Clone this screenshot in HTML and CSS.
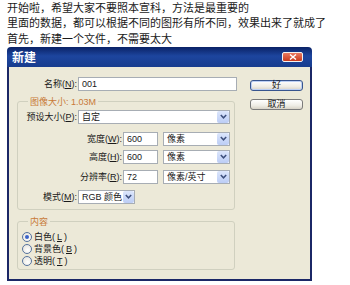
FILE: index.html
```html
<!DOCTYPE html>
<html lang="zh">

<head>
    <meta charset="UTF-8">
    <meta name="viewport" content="width=device-width, initial-scale=1.0">
    <title>新建</title>
    <link rel="stylesheet" href="styles.css">
</head>

<body>
    <p class="intro">开始啦，希望大家不要照本宣科，方法是最重要的<br>里面的数据，都可以根据不同的图形有所不同，效果出来了就成了<br>首先，新建一个文件，不需要太大</p>

    <div class="dialog">
        <div class="titlebar">
            <span class="title">新建</span>
            <span class="close">
                <svg width="8" height="6" viewBox="0 0 8 6"><path d="M1 0.5 L7 5.5 M7 0.5 L1 5.5" stroke="#fff" stroke-width="1.4" fill="none"/></svg>
            </span>
        </div>
        <div class="dialog-body">
            <div class="main">
                <div class="row">
                    <label class="lbl lbl-name">名称(<u>N</u>):</label>
                    <div class="field field-name">001</div>
                </div>

                <fieldset class="group group-size">
                    <legend>图像大小: 1.03M</legend>
                    <div class="row">
                        <label class="lbl lbl-short">预设大小(<u>P</u>):</label>
                        <div class="select select-preset"><span class="value">自定</span><span class="arrow"><svg width="7" height="5" viewBox="0 0 7 5"><path d="M0.8 1 L3.5 3.8 L6.2 1" stroke="#3d4f7c" stroke-width="1.5" fill="none"/></svg></span></div>
                    </div>
                    <div class="row row-w">
                        <label class="lbl lbl-long">宽度(<u>W</u>):</label>
                        <div class="field field-num">600</div>
                        <div class="select select-unit"><span class="value">像素</span><span class="arrow"><svg width="7" height="5" viewBox="0 0 7 5"><path d="M0.8 1 L3.5 3.8 L6.2 1" stroke="#3d4f7c" stroke-width="1.5" fill="none"/></svg></span></div>
                    </div>
                    <div class="row row-h">
                        <label class="lbl lbl-long">高度(<u>H</u>):</label>
                        <div class="field field-num">600</div>
                        <div class="select select-unit"><span class="value">像素</span><span class="arrow"><svg width="7" height="5" viewBox="0 0 7 5"><path d="M0.8 1 L3.5 3.8 L6.2 1" stroke="#3d4f7c" stroke-width="1.5" fill="none"/></svg></span></div>
                    </div>
                    <div class="row row-r">
                        <label class="lbl lbl-long">分辨率(<u>R</u>):</label>
                        <div class="field field-num">72</div>
                        <div class="select select-unit"><span class="value">像素/英寸</span><span class="arrow"><svg width="7" height="5" viewBox="0 0 7 5"><path d="M0.8 1 L3.5 3.8 L6.2 1" stroke="#3d4f7c" stroke-width="1.5" fill="none"/></svg></span></div>
                    </div>
                    <div class="row row-m">
                        <label class="lbl lbl-short">模式(<u>M</u>):</label>
                        <div class="select select-mode"><span class="value">RGB 颜色</span><span class="arrow"><svg width="7" height="5" viewBox="0 0 7 5"><path d="M0.8 1 L3.5 3.8 L6.2 1" stroke="#3d4f7c" stroke-width="1.5" fill="none"/></svg></span></div>
                    </div>
                </fieldset>

                <fieldset class="group group-content">
                    <legend>内容</legend>
                    <div class="radio checked"><span class="dot"></span>白色(<u>L</u>)</div>
                    <div class="radio"><span class="dot"></span>背景色(<u>B</u>)</div>
                    <div class="radio"><span class="dot"></span>透明(<u>T</u>)</div>
                </fieldset>
            </div>

            <div class="side">
                <button class="btn btn-default">好</button>
                <button class="btn">取消</button>
            </div>
        </div>
    </div>
</body>

</html>
```

FILE: styles.css
```css
body {
    margin: 0;
    background: #fff;
    color: #1a1a1a;
    font-family: "Liberation Sans", "Noto Sans CJK SC", sans-serif;
}

.intro {
    margin: 0;
    padding: 1px 0 0 7px;
    font-size: 11px;
    line-height: 15.3px;
}

.dialog {
    margin-left: 7px;
    width: 305px;
    height: 234px;
    display: flex;
    flex-direction: column;
    font-size: 9px;
}

.titlebar {
    height: 20px;
    flex: none;
    display: flex;
    align-items: center;
    justify-content: space-between;
    padding: 0 9px 0 5px;
    border-radius: 4px 4px 0 0;
    background: linear-gradient(to bottom, #0a2266, #1d459e 45%, #173c8e 100%);
}

.title {
    color: #fff;
    font-weight: bold;
    font-size: 12px;
}

.close {
    width: 21px;
    height: 10px;
    box-sizing: border-box;
    display: flex;
    align-items: center;
    justify-content: center;
    border: 1px solid #f2f2f2;
    border-radius: 2px;
    background: linear-gradient(to bottom, #ea7a60, #c9391c);
}

.dialog-body {
    flex: 1;
    display: flex;
    padding: 10px 7px 0 8px;
    background: #ece9d8;
    border: 2px solid #1b2766;
    border-top: none;
}

.main {
    width: 220px;
}

.row {
    display: flex;
    align-items: center;
    height: 14px;
}

.row-w {
    margin-top: 8px;
}

.row-h {
    margin-top: 4px;
}

.row-r,
.row-m {
    margin-top: 6px;
}

.lbl {
    box-sizing: border-box;
    padding-right: 1px;
    text-align: right;
    white-space: nowrap;
}

.lbl-name {
    width: 61px;
}

.lbl-short {
    width: 60px;
}

.lbl-long {
    width: 105px;
}

.field {
    height: 14px;
    box-sizing: border-box;
    padding-left: 3px;
    line-height: 12px;
    background: #fff;
    border: 1px solid #a7adb4;
}

.field-name {
    width: 159px;
}

.field-num {
    width: 35px;
    margin-right: 5px;
}

.select {
    height: 14px;
    box-sizing: border-box;
    display: flex;
    align-items: stretch;
    background: #fff;
    border: 1px solid #a7adb4;
}

.select .value {
    flex: 1;
    padding-left: 3px;
    line-height: 12px;
    white-space: nowrap;
}

.select .arrow {
    width: 12px;
    display: flex;
    align-items: center;
    justify-content: center;
    margin: 0 0 0 1px;
    border-radius: 2px;
    background: linear-gradient(to bottom, #dce6fb, #bccdf5);
}

.select-preset {
    width: 152px;
}

.select-unit {
    width: 67px;
}

.select-mode {
    width: 57px;
}

.group {
    width: 218px;
    box-sizing: border-box;
    margin: 5px 0 0;
    border: 1px solid #d0d0bf;
    border-radius: 3px;
    min-width: 0;
}

.group legend {
    margin-left: 10px;
    padding: 0 2px;
    color: #c87a38;
    line-height: 12px;
}

.group-size {
    padding: 2px 0 5px;
}

.group-content {
    margin-top: 6px;
    padding: 3px 0 2px;
}

.radio {
    display: flex;
    align-items: center;
    gap: 2px;
    height: 12px;
    padding-left: 4px;
}

.dot {
    width: 10px;
    height: 10px;
    box-sizing: border-box;
    display: flex;
    align-items: center;
    justify-content: center;
    border: 1px solid #56739e;
    border-radius: 50%;
    background: radial-gradient(circle at 60% 65%, #fff, #e2e0d8);
}

.radio.checked .dot::after {
    content: "";
    width: 4px;
    height: 4px;
    border-radius: 50%;
    background: #3a62c8;
}

.side {
    margin-left: 13px;
    width: 53px;
    display: flex;
    flex-direction: column;
    padding-top: 3px;
}

.btn {
    height: 11px;
    padding: 0;
    font: inherit;
    line-height: 9px;
    color: #1a1a1a;
    border: 1px solid #7b7b7b;
    border-radius: 3px;
    background: linear-gradient(to bottom, #fff, #efede6 60%, #d8d3c7);
}

.btn + .btn {
    margin-top: 8px;
}

.btn-default {
    border-color: #38558e;
    box-shadow: inset 0 0 0 1px #bccff3;
}
```
